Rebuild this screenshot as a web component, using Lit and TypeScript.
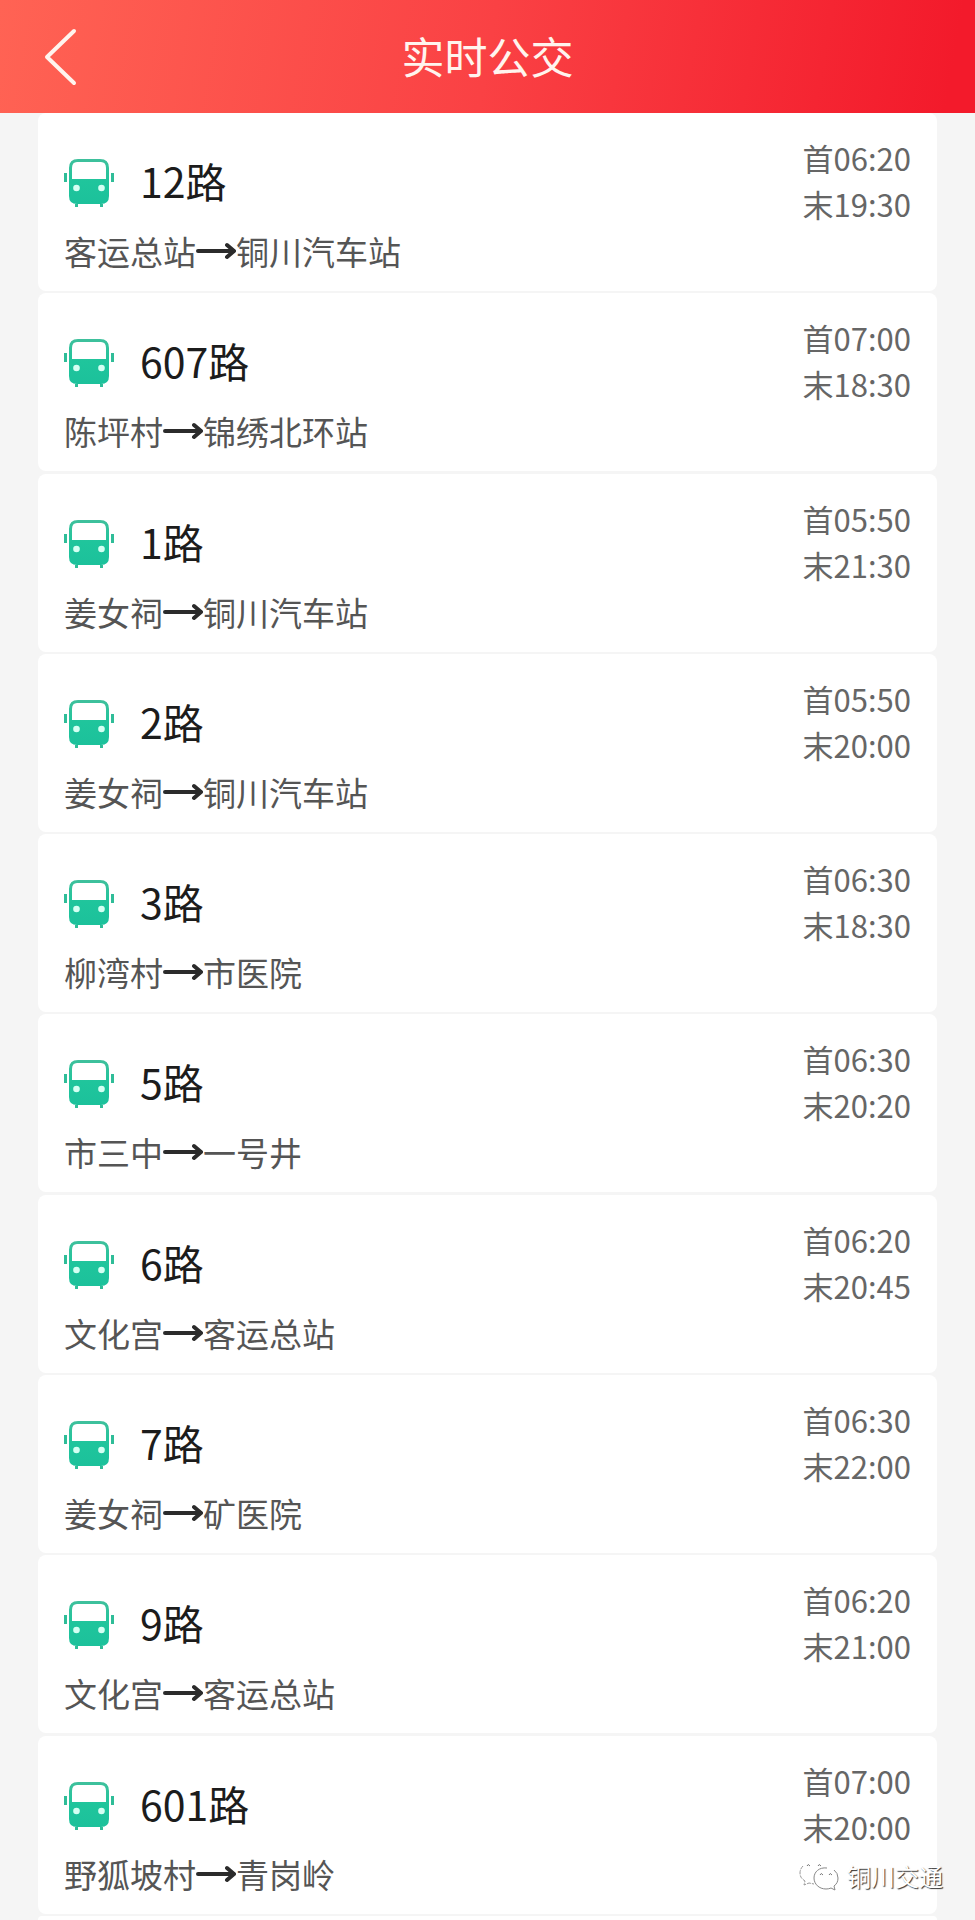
import { LitElement, html, css } from "lit";
import { customElement, property } from "lit/decorators.js";

interface Route {
  name: string;
  from: string;
  to: string;
  first: string;
  last: string;
}

const ROUTES: Route[] = [
  { name: "12路", from: "客运总站", to: "铜川汽车站", first: "06:20", last: "19:30" },
  { name: "607路", from: "陈坪村", to: "锦绣北环站", first: "07:00", last: "18:30" },
  { name: "1路", from: "姜女祠", to: "铜川汽车站", first: "05:50", last: "21:30" },
  { name: "2路", from: "姜女祠", to: "铜川汽车站", first: "05:50", last: "20:00" },
  { name: "3路", from: "柳湾村", to: "市医院", first: "06:30", last: "18:30" },
  { name: "5路", from: "市三中", to: "一号井", first: "06:30", last: "20:20" },
  { name: "6路", from: "文化宫", to: "客运总站", first: "06:20", last: "20:45" },
  { name: "7路", from: "姜女祠", to: "矿医院", first: "06:30", last: "22:00" },
  { name: "9路", from: "文化宫", to: "客运总站", first: "06:20", last: "21:00" },
  { name: "601路", from: "野狐坡村", to: "青岗岭", first: "07:00", last: "20:00" },
];

@customElement("route-card")
export class RouteCard extends LitElement {
  @property({ attribute: false }) route!: Route;

  static styles = css`
    :host {
      display: flex;
      justify-content: space-between;
      padding: 22px 26px 18px;
      background: #fff;
      border-radius: 8px;
    }
    .line {
      display: flex;
      flex-direction: column;
      gap: 21px;
      padding-top: 23px;
    }
    .head {
      display: flex;
      align-items: flex-start;
      gap: 26px;
    }
    .bus {
      display: block;
      width: 50px;
      height: 50px;
    }
    .name {
      margin: 0;
      font-size: 41px;
      line-height: 44px;
      font-weight: 400;
      color: #1c1c1c;
    }
    .stops {
      display: flex;
      align-items: center;
      margin: 0;
      font-size: 33px;
      line-height: 44px;
      color: #555;
    }
    .arrow {
      display: block;
      width: 40px;
      height: 18px;
    }
    .times {
      margin: 0;
      font-size: 31px;
      line-height: 46px;
      color: #666;
      text-align: right;
    }
  `;

  render() {
    const r = this.route;
    return html`
      <div class="line">
        <div class="head">
          <svg class="bus" viewBox="0 0 50 50" aria-hidden="true">
            <defs>
              <linearGradient id="g" x1="0" y1="0" x2="0" y2="1">
                <stop offset="0" stop-color="#3fc09c" />
                <stop offset="0.5" stop-color="#1fc59c" />
                <stop offset="1" stop-color="#1cc19b" />
              </linearGradient>
            </defs>
            <path
              fill="url(#g)"
              fill-rule="evenodd"
              d="M14 1H36Q45 1 45 10V38Q45 46 37 46H13Q5 46 5 38V10Q5 1 14 1ZM13 4Q8 4 8 10V21H42V10Q42 4 37 4Z"
            />
            <path fill="#2fbd98" d="M0 15H3V24H0ZM47 15H50V24H47ZM11 46H14V49H11ZM36 46H39V49H36Z" />
            <circle cx="12.500" cy="30" r="3.300" fill="#d5fff3" />
            <circle cx="37.500" cy="30" r="3.300" fill="#d5fff3" />
          </svg>
          <h2 class="name">${r.name}</h2>
        </div>
        <p class="stops">
          <span>${r.from}</span>
          <svg class="arrow" viewBox="0 0 40 18" role="img" aria-label="至">
            <path
              d="M2 9H38M31 3L38 9L31 15"
              fill="none"
              stroke="#2b2b2b"
              stroke-width="4"
              stroke-linecap="round"
              stroke-linejoin="round"
            />
          </svg>
          <span>${r.to}</span>
        </p>
      </div>
      <div class="times">
        <div>首${r.first}</div>
        <div>末${r.last}</div>
      </div>
    `;
  }
}

@customElement("app-root")
export class AppRoot extends LitElement {
  static styles = css`
    :host {
      position: relative;
      display: flex;
      flex-direction: column;
      min-height: 100vh;
      background: #f5f5f5;
      font-family: "Noto Sans CJK SC", "Noto Sans", sans-serif;
    }
    .bar {
      display: grid;
      grid-template-columns: 1fr auto 1fr;
      align-items: center;
      height: 113px;
      background: linear-gradient(100deg, #ff6354 0%, #fa4144 50%, #f31a2b 97%);
      color: #fff4ee;
    }
    .back {
      justify-self: start;
      margin: 0;
      padding: 0 40px;
      border: 0;
      background: none;
      color: inherit;
      cursor: pointer;
    }
    .chevron {
      display: block;
      width: 40px;
      height: 60px;
    }
    .title {
      margin: 0;
      padding-bottom: 4px;
      font-size: 43px;
      line-height: 60px;
      font-weight: 400;
    }
    .list {
      flex: 1;
      display: flex;
      flex-direction: column;
      justify-content: space-between;
      margin: 0;
      padding: 0 38px;
      list-style: none;
    }
    .next {
      height: 4px;
      background: #fff;
      border-radius: 8px 8px 0 0;
    }
    .mark {
      position: absolute;
      right: 32px;
      bottom: 27px;
      display: flex;
      align-items: center;
      gap: 8px;
      font-size: 24px;
      line-height: 34px;
      color: #fff;
      text-shadow: 1px 1px 1px #333;
    }
    .wechat {
      display: block;
      width: 40px;
      height: 30px;
    }
  `;

  render() {
    return html`
      <header class="bar">
        <button class="back" type="button" aria-label="返回">
          <svg class="chevron" viewBox="0 0 40 60" aria-hidden="true">
            <path
              d="M34 4L7 30L34 56"
              fill="none"
              stroke="currentColor"
              stroke-width="4"
              stroke-linecap="round"
              stroke-linejoin="round"
            />
          </svg>
        </button>
        <h1 class="title">实时公交</h1>
      </header>
      <ul class="list">
        ${ROUTES.map((r) => html`<li><route-card .route=${r}></route-card></li>`)}
        <li class="next" aria-hidden="true"></li>
      </ul>
      <div class="mark">
        <svg class="wechat" viewBox="0 0 40 30" aria-hidden="true">
          <path
            d="M4 5Q1 8 1 12C1 16 3 18 6 20L5 24L10 22L15 23"
            fill="none"
            stroke="#999"
            stroke-dasharray="4 1"
          />
          <path
            d="M28 7C20 6 15 11 15 17C15 23 20 28 27 28Q30 28 32 27L36 29L35 25C38 23 39 20 39 17Q39 12 35 9"
            fill="#fff"
            stroke="#888"
          />
          <path
            d="M8 5Q9 2 11 5M19 5Q20 2 22 5M21 14Q22 11 24 14M30 14Q31 11 33 14"
            fill="none"
            stroke="#777"
          />
        </svg>
        <span>铜川交通</span>
      </div>
    `;
  }
}
